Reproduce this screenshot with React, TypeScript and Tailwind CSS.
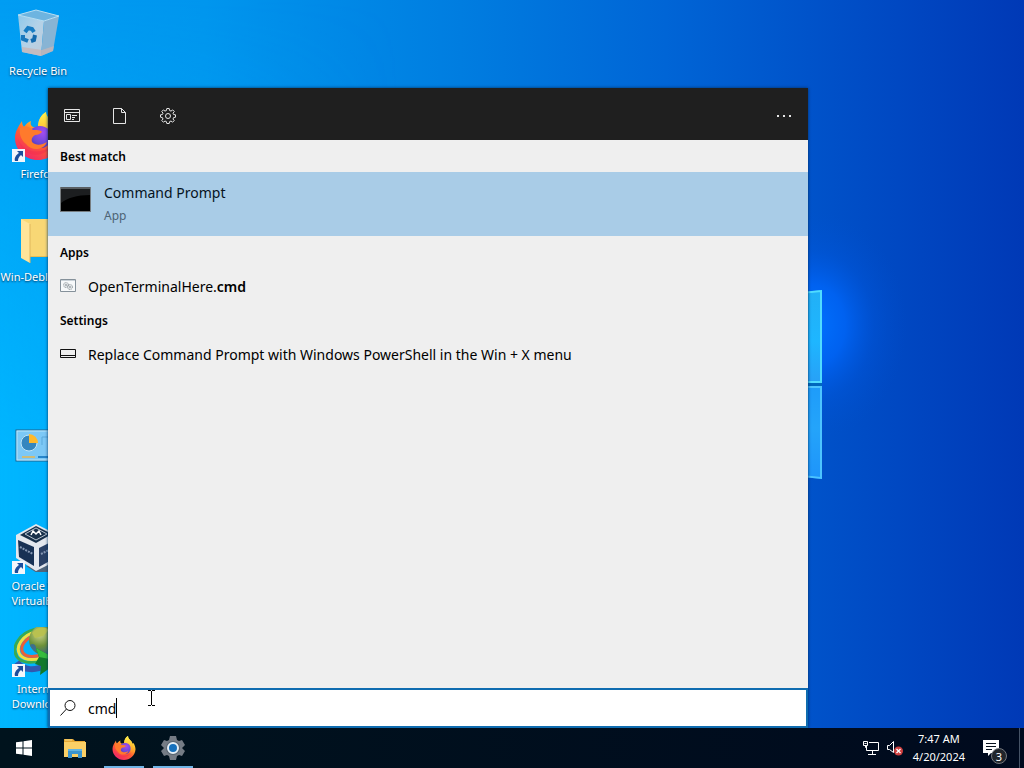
import { useState } from "react"
import type { ReactNode } from "react"

const Wallpaper = () => (
  <svg viewBox="0 0 1024 768" preserveAspectRatio="none" className="absolute inset-0 w-full h-full" aria-hidden="true">
    <defs>
      <linearGradient id="sky" x1="0" y1="0" x2="1" y2="0">
        <stop offset="0" stopColor="#009df3" />
        <stop offset="0.2" stopColor="#0096ee" />
        <stop offset="0.45" stopColor="#007de0" />
        <stop offset="0.65" stopColor="#0065d6" />
        <stop offset="0.79" stopColor="#0053ca" />
        <stop offset="0.9" stopColor="#0045c0" />
        <stop offset="1" stopColor="#0039b6" />
      </linearGradient>
      <linearGradient id="leftGlow" x1="0" y1="0" x2="1" y2="0">
        <stop offset="0" stopColor="#00b6ff" />
        <stop offset="1" stopColor="#00b0ff" stopOpacity="0" />
      </linearGradient>
      <linearGradient id="leftFade" x1="0" y1="0" x2="0" y2="1">
        <stop offset="0" stopColor="#000" />
        <stop offset="0.6" stopColor="#fff" />
        <stop offset="1" stopColor="#fff" />
      </linearGradient>
      <mask id="leftMask">
        <rect width="1024" height="768" fill="url(#leftFade)" />
      </mask>
      <radialGradient id="windowGlow">
        <stop offset="0" stopColor="#0072ff" />
        <stop offset="0.35" stopColor="#0066fa" stopOpacity="0.8" />
        <stop offset="0.65" stopColor="#005ae6" stopOpacity="0.3" />
        <stop offset="1" stopColor="#0050d0" stopOpacity="0" />
      </radialGradient>
      <linearGradient id="upperPane" x1="0" y1="0" x2="0" y2="1">
        <stop offset="0" stopColor="#22b0f6" />
        <stop offset="0.55" stopColor="#1eb6ff" />
        <stop offset="1" stopColor="#28a0f6" />
      </linearGradient>
      <linearGradient id="lowerPane" x1="0" y1="0" x2="0" y2="1">
        <stop offset="0" stopColor="#1e9cfa" />
        <stop offset="0.45" stopColor="#24a4fa" />
        <stop offset="1" stopColor="#1e94fa" />
      </linearGradient>
    </defs>
    <rect width="1024" height="768" fill="url(#sky)" />
    <rect width="400" height="768" fill="url(#leftGlow)" mask="url(#leftMask)" />
    <ellipse cx="812" cy="325" rx="95" ry="115" fill="url(#windowGlow)" />
    <path d="M700 303 822 290V383H700Z" fill="url(#upperPane)" />
    <path d="M700 303 821 291V382H700" fill="none" stroke="#50dcff" strokeWidth="2" />
    <path d="M700 386H822V479L700 466Z" fill="url(#lowerPane)" />
    <path d="M700 387H821V478L700 465" fill="none" stroke="#4cc4ff" strokeWidth="2" />
    <rect x="700" y="383" width="122" height="3" fill="#0068be" />
  </svg>
)

const FirefoxIcon = ({ className, id }: { className: string; id: string }) => (
  <svg viewBox="0 0 48 48" className={className} aria-hidden="true">
    <defs>
      <linearGradient id={`${id}-body`} x1="0.75" y1="0.05" x2="0.2" y2="0.95">
        <stop offset="0" stopColor="#fff04a" />
        <stop offset="0.3" stopColor="#ffb52a" />
        <stop offset="0.6" stopColor="#ff5b32" />
        <stop offset="1" stopColor="#f0256c" />
      </linearGradient>
      <radialGradient id={`${id}-globe`} cx="0.6" cy="0.3" r="0.8">
        <stop offset="0" stopColor="#a44cf0" />
        <stop offset="0.6" stopColor="#6d48d8" />
        <stop offset="1" stopColor="#4736a6" />
      </radialGradient>
      <linearGradient id={`${id}-flame`} x1="0" y1="0" x2="0" y2="1">
        <stop offset="0" stopColor="#fff24c" />
        <stop offset="1" stopColor="#ff9a22" />
      </linearGradient>
    </defs>
    <path
      d="M8 9C8 12 9 14 10 15C12 12 14 10 17 9C16 12 17 14 19 15H26C24 8 27 3 32 0C32 5 36 7 39 11C40 13 41 14 41 16L43 14C46 19 47 23 47 27C46 39 36 48 24 48C11 48 1 38 1 26C1 20 4 15 8 9Z"
      fill={`url(#${id}-body)`}
    />
    <path d="M32 0C32 5 36 7 39 11C43 17 43 26 39 32L33 20L24 14C24 8 27 3 32 0Z" fill={`url(#${id}-flame)`} />
    <path d="M16 19C20 13 30 12 35 18C40 25 36 35 28 36C19 37 13 29 16 19Z" fill={`url(#${id}-globe)`} />
    <path d="M6 16C11 13 16 15 19 18C22 18 27 18 28 20C26 22 24 23 21 23C18 25 17 27 18 30C22 34 28 33 33 30C30 38 18 40 12 32C7 28 5 22 6 16Z" fill="#ff7a2c" />
    <path d="M4 26C7 39 25 45 38 33C30 48 7 46 4 26Z" fill="#f4304f" opacity="0.6" />
  </svg>
)

const RecycleBinIcon = () => (
  <svg viewBox="0 0 48 48" className="size-12" aria-hidden="true">
    <defs>
      <linearGradient id="bin" x1="0" y1="0" x2="1" y2="1">
        <stop offset="0" stopColor="#8ec8ea" />
        <stop offset="0.5" stopColor="#b4d2e8" />
        <stop offset="1" stopColor="#c0cbd8" />
      </linearGradient>
    </defs>
    <path d="M4 6 22 1 45 7 30 12Z" fill="#6db4e0" />
    <path d="M4 6 30 12 27 47 8 43Z" fill="url(#bin)" />
    <path d="M30 12 45 7 39 42 27 47Z" fill="#88b4d4" />
    <path d="M8 38 28 41 40 37 39 42 27 47 8 43Z" fill="#c7b5b5" opacity="0.75" />
    <path d="M4 6 22 1 45 7 30 12Z" fill="none" stroke="#b8def2" />
    <path d="M11 23 14 19 18 20 20 23" fill="none" stroke="#167cc3" strokeWidth="4" />
    <path d="M21 26 20 31 17 32" fill="none" stroke="#1169ae" strokeWidth="4" />
    <path d="M14 32 9 30 9 26" fill="none" stroke="#1978bd" strokeWidth="4" />
  </svg>
)

const FolderIcon = () => (
  <svg viewBox="0 0 48 48" className="size-12" aria-hidden="true">
    <path d="M7 4H42V42H15Z" fill="#e9bd55" />
    <path d="M7 4H41V41H15Z" fill="#f8d775" />
    <path d="M7 4 16 9V48L7 43Z" fill="#ffe49a" />
    <path d="M16 9V48" stroke="#dfb75c" />
  </svg>
)

const ControlPanelIcon = () => (
  <svg viewBox="0 0 48 48" className="size-12" aria-hidden="true">
    <rect x="2" y="9" width="44" height="31" fill="#7cc8f6" stroke="#23628c" />
    <rect x="3" y="10" width="42" height="29" fill="none" stroke="#b8e6fc" />
    <circle cx="15" cy="22" r="8" fill="#3586bf" stroke="#c0e4f8" />
    <path d="M15 22V13A9 9 0 0 1 24 22Z" fill="#ffb92b" />
    <path d="M28 24V16H42" fill="none" stroke="#5ba9dc" />
    <path d="M8 36H21" stroke="#cdbb79" strokeWidth="2" />
    <path d="M24 36H42" stroke="#2585ca" strokeWidth="2" />
  </svg>
)

const VirtualBoxIcon = () => (
  <svg viewBox="0 0 48 48" className="size-12" aria-hidden="true">
    <path d="M12 42 28 52 42 46V36Z" fill="#50657b" />
    <path d="M22 0 42 10V37L22 47L2 34V11Z" fill="#e4e8ee" />
    <path d="M22 2 38 10 22 19 6 11Z" fill="#18304a" />
    <path d="M22 4 33 10 22 16 11 10Z" fill="none" stroke="#b7c3d0" />
    <path d="M17 11 19 7 22 10 25 7 27 11" fill="none" stroke="#fff" strokeWidth="1.5" />
    <path d="M4 16 20 23V42L5 33Z" fill="#183154" />
    <path d="M25 24 41 16V34L25 43Z" fill="#2a4166" />
    <path d="M6 23 19 30M27 30 39 24" stroke="#8799b5" strokeWidth="2" strokeDasharray="2 1" />
  </svg>
)

const DownloadManagerIcon = () => (
  <svg viewBox="0 0 48 48" className="size-12" aria-hidden="true">
    <defs>
      <radialGradient id="earth" cx="0.35" cy="0.3" r="0.8">
        <stop offset="0" stopColor="#cfd488" />
        <stop offset="0.5" stopColor="#6d9238" />
        <stop offset="1" stopColor="#2b5b88" />
      </radialGradient>
    </defs>
    <path d="M3 35C9 44 22 44 32 38" fill="none" stroke="#3158ae" strokeWidth="6" />
    <path d="M22 2C5 6-3 20 3 30C8 37 20 36 29 33" fill="none" stroke="#38aa52" strokeWidth="3" />
    <path d="M22 5C8 8 1 20 6 28C11 34 20 33 28 31" fill="none" stroke="#f0e040" strokeWidth="3" />
    <path d="M22 8C11 11 5 20 9 26C13 31 20 30 27 28" fill="none" stroke="#e8603a" strokeWidth="3" />
    <circle cx="30" cy="13" r="15" fill="url(#earth)" />
    <path d="M18 6C23 0 30-1 35 3L29 9 21 11Z" fill="#b9c150" />
    <path d="M16 18C20 15 23 19 22 24C19 23 17 21 16 18Z" fill="#3d6f8c" />
    <path d="M22 21 46 34 26 48 27 39 21 37 25 30Z" fill="#127a2c" />
    <path d="M22 21 46 34 25 30Z" fill="#35bc3e" />
  </svg>
)

const ShortcutArrow = () => (
  <svg viewBox="0 0 13 13" className="absolute -left-0.5 -bottom-0.5 size-[13px]" aria-hidden="true">
    <path d="M0 0H13V13H0Z" fill="#f2f6fb" />
    <path d="M5 2H11V8L9 6C7 8 6 9 6 12H3C2 9 4 6 7 4Z" fill="#1c4e9c" />
  </svg>
)

type DesktopItem = {
  name: string
  icon: ReactNode
  shortcut?: boolean
  label?: string
}

const desktopItems: (DesktopItem | null)[] = [
  { name: "Recycle Bin", icon: <RecycleBinIcon />, label: "Recycle Bin" },
  { name: "Firefox", icon: <FirefoxIcon className="size-12" id="ff-desktop" />, shortcut: true, label: "Firefox" },
  { name: "Win-Debloater", icon: <FolderIcon />, label: "Win-Debloater" },
  null,
  { name: "Control Panel", icon: <ControlPanelIcon /> },
  { name: "Oracle VM VirtualBox", icon: <VirtualBoxIcon />, shortcut: true, label: "Oracle VM VirtualBox" },
  { name: "Internet Download", icon: <DownloadManagerIcon />, shortcut: true, label: "Internet Download" },
]

const DesktopIcons = () => (
  <div className="relative flex w-19 flex-col">
    {desktopItems.map((item, i) => (
      <div key={i} className="h-[103px] pt-[9px]">
        {item && (
          <button aria-label={item.name} className="flex w-full flex-col items-center gap-1.5 text-white">
            <span className="relative">
              {item.icon}
              {item.shortcut && <ShortcutArrow />}
            </span>
            {item.label && (
              <span className="text-[11px] leading-[15px] [text-shadow:0_1px_2px_#00305a]">{item.label}</span>
            )}
          </button>
        )}
      </div>
    ))}
  </div>
)

const gearPath =
  "M6.8 .5H9.2L9.6 2.5L11 3.1L12.7 1.9L14.3 3.5L13 5.2L13.6 6.5L15.5 6.8V9.2L13.6 9.6L13 11L14.2 12.6L12.6 14.2L11 13L9.6 13.6L9.2 15.5H6.8L6.4 13.6L5 13L3.4 14.2L1.8 12.6L3 11L2.4 9.6L.5 9.2V6.8L2.4 6.5L3 5.2L1.8 3.5L3.4 1.9L5 3.1L6.4 2.5Z"

const FilterBar = () => (
  <div className="flex h-13 items-center justify-between bg-[#1f1f1f] pt-1 text-[#e6e6e6]">
    <div className="flex">
      <button aria-label="Apps" className="flex size-12 items-center justify-center">
        <svg viewBox="0 0 16 16" className="size-4" fill="none" stroke="currentColor">
          <path d="M.5 1.5H15.5V13.5H.5ZM.5 4.5H15.5M2.5 6.5H6.5V11.5H2.5ZM8 7.5H13M8 9.5H11M8 11.5H10" />
        </svg>
      </button>
      <button aria-label="Documents" className="flex size-12 items-center justify-center">
        <svg viewBox="0 0 16 16" className="size-4" fill="none" stroke="currentColor">
          <path d="M1.5 .5H9.5L13.5 4.5V15.5H1.5ZM9.5 .5V4.5H13.5" />
        </svg>
      </button>
      <button aria-label="Settings" className="flex size-12 items-center justify-center">
        <svg viewBox="0 0 16 16" className="size-4" fill="none" stroke="currentColor">
          <path d={gearPath} />
          <circle cx="8" cy="8" r="2.5" />
        </svg>
      </button>
    </div>
    <button aria-label="More options" className="flex size-12 items-center justify-center">
      <svg viewBox="0 0 16 16" className="size-4" fill="currentColor">
        <path d="M1 7H3V9H1ZM7 7H9V9H7ZM13 7H15V9H13Z" />
      </svg>
    </button>
  </div>
)

const SectionHeading = ({ children }: { children: ReactNode }) => (
  <h2 className="flex h-8 items-center px-3 pt-px text-xs font-semibold">{children}</h2>
)

const Results = () => (
  <div className="flex-1 bg-[#efefef] text-black">
    <SectionHeading>Best match</SectionHeading>
    <button className="flex h-16 w-full items-start gap-3 bg-[#a9cce7] px-3 pt-3 text-left">
      <svg viewBox="0 0 32 32" className="size-8" aria-hidden="true">
        <path d="M0 3H31V28H0Z" fill="#777d81" />
        <path d="M1 5H30V27H1Z" fill="#000" />
        <path d="M1 5H30V11C17 11 7 14 1 19Z" fill="#1c1e20" />
        <path d="M1 4H30" stroke="#3c4042" />
      </svg>
      <span className="flex flex-col gap-1">
        <span className="text-sm leading-[18px] text-[#06131d]">Command Prompt</span>
        <span className="text-xs leading-5 text-[#4d6375]">App</span>
      </span>
    </button>
    <SectionHeading>Apps</SectionHeading>
    <button className="flex h-9 w-full items-center gap-3 px-3 text-left text-sm">
      <svg viewBox="0 0 16 16" className="size-4" fill="none" aria-hidden="true">
        <path d="M.5 1.5H15.5V13.5H.5Z" fill="#f7f9fa" stroke="#85919a" />
        <path d="M1 2.5H15" stroke="#c9d1d7" />
        <circle cx="6" cy="7" r="2.5" stroke="#8c9499" strokeDasharray="1.2 .6" />
        <circle cx="6" cy="7" r="1" stroke="#9ba3a8" />
        <circle cx="10" cy="9" r="2.5" stroke="#8c9499" strokeDasharray="1.2 .6" />
        <circle cx="10" cy="9" r="1" stroke="#9ba3a8" />
      </svg>
      <span className="pt-px">OpenTerminalHere.<b className="font-semibold">cmd</b></span>
    </button>
    <SectionHeading>Settings</SectionHeading>
    <button className="flex h-9 w-full items-center gap-3 px-3 text-left text-sm">
      <svg viewBox="0 0 16 16" className="size-4" fill="none" stroke="#111" aria-hidden="true">
        <path d="M.5 3.5H15.5V11.5H.5ZM.5 9.5H15.5" />
      </svg>
      <span className="pt-px">Replace Command Prompt with Windows PowerShell in the Win + X menu</span>
    </button>
  </div>
)

const SearchBox = () => {
  const [query, setQuery] = useState("cmd")

  return (
    <label className="relative flex h-10 items-center border-2 border-[#0f6cb0] bg-white px-2.5 text-sm text-black">
      <svg viewBox="0 0 16 16" className="mr-3 size-4" fill="none" stroke="#111" aria-hidden="true">
        <circle cx="10" cy="5.5" r="5" />
        <path d="M6.5 9 .5 15.5" />
      </svg>
      <input
        aria-label="Search"
        value={query}
        onChange={(e) => setQuery(e.target.value)}
        className="field-sizing-content pt-px caret-transparent outline-none"
      />
      <span className="h-5 w-px bg-black" />
      {/* I-beam pointer */}
      <svg viewBox="0 0 7 16" className="absolute left-[98px] top-0 h-4 w-[7px]" fill="none" stroke="#000" aria-hidden="true">
        <path d="M0 .5H3M4 .5H7M3.5 1V15M0 15.5H3M4 15.5H7" />
      </svg>
    </label>
  )
}

const Taskbar = () => (
  <footer className="relative flex h-10 items-center justify-between bg-linear-to-r from-[#00131d] to-[#000a1e] text-white">
    <div className="flex h-full gap-px">
      <button aria-label="Start" className="mr-0.5 flex w-12 items-center justify-center">
        <svg viewBox="0 0 16 16" className="size-4" fill="#fff">
          <path d="M0 2.3 6.5 1.4V7.5H0ZM7.5 1.2 16 0V7.5H7.5ZM0 8.5H6.5V14.6L0 13.7ZM7.5 8.5H16V16L7.5 14.8Z" />
        </svg>
      </button>
      <button aria-label="File Explorer" className="flex w-12 items-center justify-center">
        <svg viewBox="0 0 24 24" className="size-6">
          <path d="M1 3H10L12 5H22V21H1Z" fill="#e7a934" />
          <path d="M1 6H23V21H1Z" fill="#fbd066" />
          <path d="M2 4H9" stroke="#f8dc88" />
          <path d="M5 13H19V22H15V18H9V22H5Z" fill="#3b94ce" />
          <path d="M5 13H19V15H5Z" fill="#62b4e1" />
        </svg>
      </button>
      <button aria-label="Firefox" className="relative flex w-12 items-center justify-center">
        <FirefoxIcon className="size-6" id="ff-taskbar" />
        <span className="absolute inset-x-1 bottom-0 h-0.5 bg-[#70b4e6]" />
      </button>
      <button aria-label="Settings" className="relative flex w-12 items-center justify-center">
        <svg viewBox="0 0 24 24" className="size-6">
          <path d="M9 0H15L16 4L18 5L21 4L24 9L21 12L24 15L21 20L18 19L16 20L15 24H9L8 20L6 19L3 20L0 15L3 12L0 9L3 4L6 5L8 4Z" fill="#757c85" />
          <circle cx="12" cy="12" r="7" fill="#596571" />
          <circle cx="12" cy="12" r="5" fill="#1671bc" stroke="#e6f0f7" strokeWidth="2" />
        </svg>
        <span className="absolute inset-x-1 bottom-0 h-0.5 bg-[#70b4e6]" />
      </button>
    </div>
    <div className="flex h-full items-center">
      <button aria-label="Network" className="mr-2">
        <svg viewBox="0 0 16 16" className="size-4" fill="none" stroke="#fff">
          <path d="M6 2.5H15.5V10.5H3.5V6M9.5 11V14M5 14.5H13M.5 1.5H4.5V5.5H.5ZM2.5 5.5V7.5H3.5M1.5 3.5H3.5" />
        </svg>
      </button>
      <button aria-label="Volume muted" className="mr-2.5">
        <svg viewBox="0 0 16 16" className="size-4" fill="none">
          <path d="M.5 5.5H2.5L6.5 1.5V12.5L2.5 9.5H.5Z" stroke="#fff" />
          <circle cx="11.5" cy="11" r="4.5" fill="#ce3f3f" />
          <path d="M9.5 9 13.5 13M13.5 9 9.5 13" stroke="#fff" strokeWidth="1.3" />
        </svg>
      </button>
      <button className="flex flex-col items-center text-[11px] leading-[18px]">
        <span>7:47 AM</span>
        <span>4/20/2024</span>
      </button>
      <button aria-label="Notifications" className="relative ml-4.5 mr-5">
        <svg viewBox="0 0 16 16" className="size-4">
          <path d="M0 0H16V13H8L5 16V13H0Z" fill="#fff" />
          <path d="M3 3.5H13M3 6.5H13M3 9.5H9" stroke="#07111d" />
        </svg>
        <span className="absolute left-2 top-2 flex size-4 items-center justify-center rounded-full border border-[#73777d] bg-[#20252b] text-[11px] leading-none">
          3
        </span>
      </button>
      <span className="mr-1 h-full w-px bg-[#465366]" />
    </div>
  </footer>
)

export default function App() {
  return (
    <div className="relative flex h-screen flex-col overflow-hidden font-['Noto_Sans',sans-serif]">
      <Wallpaper />
      <main className="relative min-h-0 flex-1">
        <DesktopIcons />
        {/* Search window floats over the desktop icons */}
        <section className="absolute bottom-0 left-12 top-22 flex w-190 max-w-[calc(100%-3rem)] flex-col shadow-[0_0_3px_#003060]">
          <FilterBar />
          <Results />
          <SearchBox />
        </section>
      </main>
      <Taskbar />
    </div>
  )
}
